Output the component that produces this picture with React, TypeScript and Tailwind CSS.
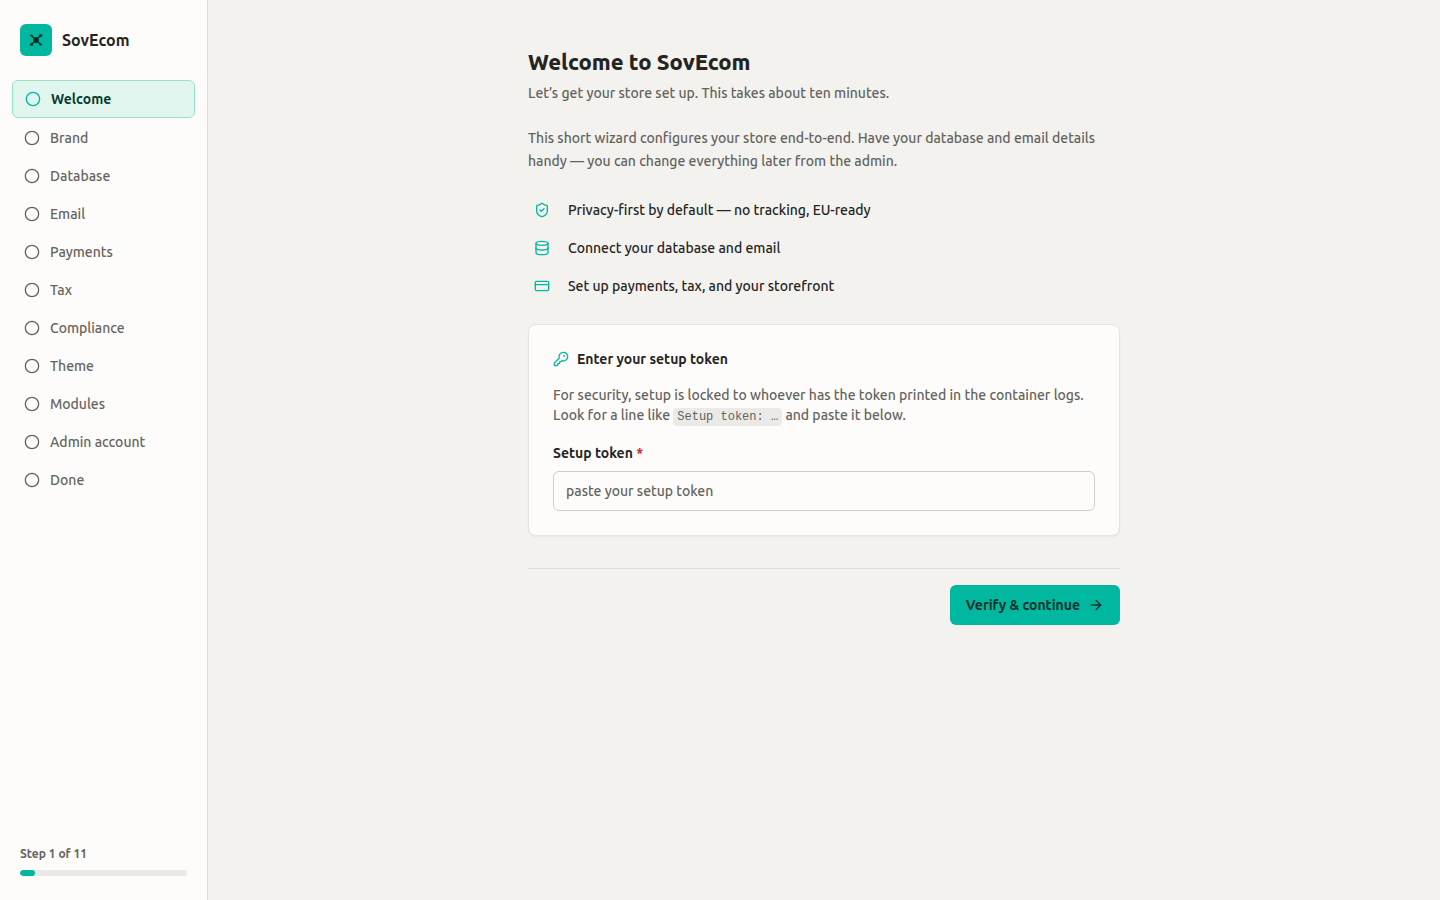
import { ArrowRight, Circle, CreditCard, Database, KeyRound, ShieldCheck } from "lucide-react";

const steps = [
  "Welcome",
  "Brand",
  "Database",
  "Email",
  "Payments",
  "Tax",
  "Compliance",
  "Theme",
  "Modules",
  "Admin account",
  "Done",
];

const highlights = [
  { icon: ShieldCheck, text: "Privacy-first by default — no tracking, EU-ready" },
  { icon: Database, text: "Connect your database and email" },
  { icon: CreditCard, text: "Set up payments, tax, and your storefront" },
];

function Logo() {
  return (
    <span className="flex size-8 items-center justify-center rounded-md bg-[#00b8a0]">
      <svg viewBox="0 0 16 16" className="size-4 text-[#06302a]" fill="currentColor" aria-hidden="true">
        <path d="M3.5 3.5 12.5 12.5M12.5 3.5 3.5 12.5" stroke="currentColor" strokeWidth="1.4" />
        <circle cx="8" cy="8" r="2.9" />
        <circle cx="3.4" cy="3.6" r="1.2" />
        <circle cx="12.6" cy="3.6" r="1.7" />
        <circle cx="3.4" cy="12.4" r="1.7" />
        <circle cx="12.6" cy="12.4" r="1.2" />
      </svg>
    </span>
  );
}

function Sidebar() {
  const current = 0;
  return (
    <aside className="flex w-52 shrink-0 flex-col border-r border-[#dddcd8] bg-[#fdfcfa]">
      <div className="flex items-center gap-2.5 px-5 py-6">
        <Logo />
        <span className="text-[16px] leading-5 font-bold text-[#25241f]">SovEcom</span>
      </div>
      <nav aria-label="Setup steps" className="flex-1 px-3">
        <ol className="flex flex-col gap-0.5">
          {steps.map((step, i) => (
            <li key={step}>
              <a
                href={"#" + step.toLowerCase().replace(" ", "-")}
                aria-current={i === current ? "step" : undefined}
                className={
                  i === current
                    ? "flex items-center gap-2.5 rounded-md border border-[#98dfc8] bg-[#e1f6ef] px-3 py-2 text-[14px] leading-5 font-semibold text-[#063b2f]"
                    : "flex items-center gap-2.5 rounded-md px-3 py-2 text-[14px] leading-5 text-[#65635e]"
                }
              >
                <Circle className={i === current ? "size-4 text-[#00b8a0]" : "size-4"} />
                {step}
              </a>
            </li>
          ))}
        </ol>
      </nav>
      <div className="px-5 pb-6">
        <p id="progress-label" className="text-[12px] leading-4 font-semibold text-[#65635e]">
          Step {current + 1} of {steps.length}
        </p>
        <div
          role="progressbar"
          aria-labelledby="progress-label"
          aria-valuemin={0}
          aria-valuemax={steps.length}
          aria-valuenow={current + 1}
          className="mt-2 h-1.5 overflow-hidden rounded-full bg-[#eae9e6]"
        >
          <div
            className="h-full rounded-full bg-[#00b8a0]"
            style={{ width: ((current + 1) / steps.length) * 100 + "%" }}
          />
        </div>
      </div>
    </aside>
  );
}

export default function App() {
  return (
    <div className="flex min-h-screen bg-[#f3f2ee] font-['Ubuntu','Noto_Sans',sans-serif] font-medium text-[#25241f]">
      <Sidebar />
      <main className="flex-1">
        <div className="mx-auto max-w-160 px-6 py-12">
          <header>
            <h1 className="text-[22px] leading-7 font-extrabold">Welcome to SovEcom</h1>
            <p className="mt-[7px] text-[14px] leading-5 text-[#65635e]">
              Let’s get your store set up. This takes about ten minutes.
            </p>
          </header>
          <p className="mt-6 text-[14px] leading-[23px] text-[#65635e]">
            This short wizard configures your store end-to-end. Have your database and email details handy — you can
            change everything later from the admin.
          </p>
          <ul className="mt-[23px] flex flex-col gap-2.5">
            {highlights.map(({ icon: Icon, text }) => (
              <li key={text} className="flex items-center gap-3 text-[14px] leading-5">
                <span className="flex h-7 w-7 items-center justify-center">
                  <Icon className="size-4 text-[#00b8a0]" />
                </span>
                {text}
              </li>
            ))}
          </ul>
          <form onSubmit={(e) => e.preventDefault()}>
            <section className="mt-6 rounded-lg border border-[#e5e4e0] bg-[#fdfcfa] p-6 shadow-xs">
              <h2 className="flex items-center gap-2 text-[14px] leading-5 font-semibold">
                <KeyRound className="size-4 text-[#00b8a0]" />
                Enter your setup token
              </h2>
              <p className="mt-4 text-[14px] leading-5 text-[#65635e]">
                For security, setup is locked to whoever has the token printed in the container logs. Look for a line
                like{" "}
                <code className="rounded-sm bg-[#eceae7] px-1 py-0.5 font-['Liberation_Mono',monospace] text-[12px] font-normal">
                  Setup token: …
                </code>{" "}
                and paste it below.
              </p>
              <label htmlFor="token" className="mt-4 block text-[14px] leading-5 font-semibold">
                Setup token <span className="text-[#dc2626]">*</span>
              </label>
              <input
                id="token"
                type="text"
                required
                placeholder="paste your setup token"
                className="mt-2 block h-10 w-full rounded-md border border-[#cfcecb] bg-[#fdfcfa] px-3 text-[14px] leading-5 placeholder:text-[#65635e]"
              />
            </section>
            <div className="mt-8 flex justify-end border-t border-[#dddcd8] pt-4">
              <button
                type="submit"
                className="flex h-10 items-center gap-2 rounded-md bg-[#00b8a0] px-4 text-[14px] leading-5 font-semibold text-[#06302a]"
              >
                Verify &amp; continue
                <ArrowRight className="size-4" />
              </button>
            </div>
          </form>
        </div>
      </main>
    </div>
  );
}
